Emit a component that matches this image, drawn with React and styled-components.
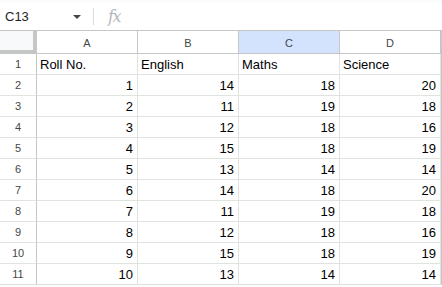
import React from 'react';
import styled, { createGlobalStyle } from 'styled-components';

const GlobalStyle = createGlobalStyle`
  html, body {
    margin: 0;
    padding: 0;
    background: #ffffff;
  }
  body {
    font-family: "Liberation Sans", Arial, sans-serif;
  }
`;

const Page = styled.div`
  width: 442px;
  height: 287px;
  overflow: hidden;
  background: #ffffff;
  border-top: 3px solid #f9fbfd;
  box-sizing: border-box;
`;

const FormulaBar = styled.div`
  height: 28px;
  display: flex;
  align-items: center;
  border-bottom: 1px solid #c4c7c5;
  box-sizing: border-box;
`;

const NameBox = styled.div`
  width: 93px;
  display: flex;
  align-items: center;
  justify-content: space-between;
  padding: 0 12px 0 5px;
  box-sizing: border-box;
  font-size: 13px;
  color: #1f1f1f;
`;

const Caret = styled.span`
  width: 0;
  height: 0;
  border-left: 4px solid transparent;
  border-right: 4px solid transparent;
  border-top: 4px solid #444746;
`;

const Divider = styled.div`
  width: 1px;
  height: 17px;
  background: #dadce0;
`;

const Fx = styled.div`
  margin-left: 14px;
  font-family: "DejaVu Serif", "Liberation Serif", serif;
  font-style: italic;
  font-size: 16px;
  color: #b4b7ba;
  letter-spacing: -1.5px;
`;

const Grid = styled.div`
  display: grid;
  grid-template-columns: 37px repeat(4, 101px);
  grid-template-rows: 23px;
  grid-auto-rows: 21px;
  border-right: 1px solid #c4c7c5;
  width: 442px;
  box-sizing: border-box;
`;

const Corner = styled.div`
  background: #f8f9fa;
  border-right: 4px solid #c4c7c5;
  border-bottom: 4px solid #c4c7c5;
  box-sizing: border-box;
`;

const ColHead = styled.div`
  display: flex;
  align-items: center;
  justify-content: center;
  font-size: 11px;
  color: #444746;
  background: ${p => (p.$active ? '#d3e3fd' : '#ffffff')};
  border-right: 1px solid #c4c7c5;
  border-bottom: 1px solid #c4c7c5;
  box-sizing: border-box;
  padding-top: 1px;
`;

const RowHead = styled.div`
  display: flex;
  align-items: center;
  justify-content: center;
  font-size: 11px;
  color: #444746;
  border-right: 1px solid #c4c7c5;
  border-bottom: 1px solid #e1e3e1;
  box-sizing: border-box;
`;

const Cell = styled.div`
  display: flex;
  align-items: flex-end;
  justify-content: ${p => (p.$num ? 'flex-end' : 'flex-start')};
  padding: 0 4px 2px 3px;
  font-size: 13px;
  line-height: 15px;
  color: #000000;
  border-right: 1px solid #e1e3e1;
  border-bottom: 1px solid #e1e3e1;
  box-sizing: border-box;
  white-space: nowrap;
  overflow: hidden;
`;

const columns = ['A', 'B', 'C', 'D'];
const header = ['Roll No.', 'English', 'Maths', 'Science'];
const rows = [
  [1, 14, 18, 20],
  [2, 11, 19, 18],
  [3, 12, 18, 16],
  [4, 15, 18, 19],
  [5, 13, 14, 14],
  [6, 14, 18, 20],
  [7, 11, 19, 18],
  [8, 12, 18, 16],
  [9, 15, 18, 19],
  [10, 13, 14, 14],
];

export default function App() {
  return (
    <>
      <GlobalStyle />
      <Page>
        <FormulaBar>
          <NameBox>
            C13
            <Caret />
          </NameBox>
          <Divider />
          <Fx>fx</Fx>
        </FormulaBar>
        <Grid>
          <Corner />
          {columns.map(c => (
            <ColHead key={c} $active={c === 'C'}>{c}</ColHead>
          ))}
          <RowHead>1</RowHead>
          {header.map(h => (
            <Cell key={h}>{h}</Cell>
          ))}
          {rows.map((r, i) => (
            <React.Fragment key={i}>
              <RowHead>{i + 2}</RowHead>
              {r.map((v, j) => (
                <Cell key={j} $num>{v}</Cell>
              ))}
            </React.Fragment>
          ))}
        </Grid>
      </Page>
    </>
  );
}
